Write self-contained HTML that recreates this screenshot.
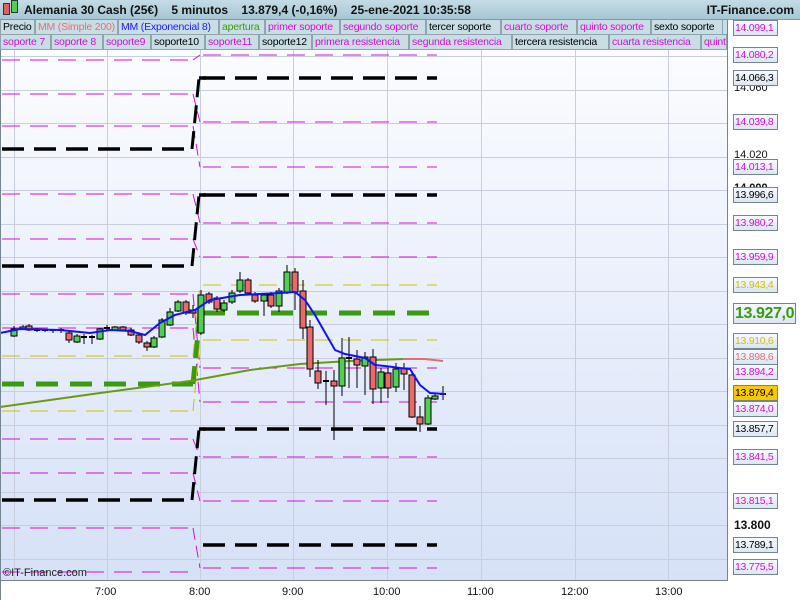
<!DOCTYPE html>
<html><head><meta charset="utf-8"><style>
*{margin:0;padding:0;box-sizing:border-box}
body{width:800px;height:600px;overflow:hidden;background:#fff;font-family:"Liberation Sans",sans-serif;position:relative}
#hdr{position:absolute;left:0;top:0;width:800px;height:20px;background:linear-gradient(#c4dce6,#a6c6d4);border-bottom:1px solid #7f9aa6;font-size:12px;font-weight:bold;color:#111;line-height:20px}
.row{position:absolute;left:0;width:727px;height:15px;background:#c9dde5;border-bottom:1px solid #7f9aa6}
.c{position:absolute;top:0;height:15px;border:1px solid #8fa4ae;border-top:none;font-size:10.5px;letter-spacing:-0.2px;line-height:14px;padding-left:2px;white-space:nowrap;overflow:hidden;background:#c9dde5}
.m{color:#d010d0}
.lb{position:absolute;left:733px;width:45px;height:16px;border:1px solid #73858f;background:linear-gradient(#f6f9ff,#dde6f2);font-size:10.5px;letter-spacing:-0.3px;line-height:15px;padding-left:1px;white-space:nowrap;overflow:hidden}
.tk{position:absolute;font-size:11px;color:#111}
.tm{position:absolute;top:586px;font-size:11px;color:#111}
</style></head><body>
<svg id="s" width="800" height="600" style="position:absolute;left:0;top:0">
<defs><linearGradient id="bg" x1="0" y1="0" x2="0" y2="1"><stop offset="0" stop-color="#fbfcff"/><stop offset="1" stop-color="#d6e1f7"/></linearGradient></defs>
<rect x="0" y="50" width="727" height="530" fill="url(#bg)"/>
<g id="g"></g>
<line x1="727.5" y1="20" x2="727.5" y2="581" stroke="#73858f"/>
<line x1="0" y1="580.5" x2="728" y2="580.5" stroke="#73858f"/>
<line x1="0.5" y1="20" x2="0.5" y2="600" stroke="#73858f"/>
</svg>
<div id="hdr"><span style="position:absolute;left:3px;top:3px;width:7px;height:12px;background:#e06060;border:1px solid #333"></span><span style="position:absolute;left:11px;top:0px;width:7px;height:13px;background:#50d050;border:1px solid #333"></span><span style="position:absolute;left:24px">Alemania 30 Cash (25€)&nbsp;&nbsp;&nbsp; 5 minutos &nbsp;&nbsp; 13.879,4 (-0,16%) &nbsp;&nbsp; 25-ene-2021 10:35:58</span><span style="position:absolute;right:6px">IT-Finance.com</span></div>
<div class="row" style="top:20px">
<div class="c" style="left:0;width:35px">Precio</div>
<div class="c" style="left:35px;width:83px;color:#e07070">MM (Simple 200)</div>
<div class="c" style="left:118px;width:101px;color:#1a1aff">MM (Exponencial 8)</div>
<div class="c" style="left:219px;width:46px;color:#3a9a10">apertura</div>
<div class="c m" style="left:265px;width:75px">primer soporte</div>
<div class="c m" style="left:340px;width:86px">segundo soporte</div>
<div class="c" style="left:426px;width:75px">tercer soporte</div>
<div class="c m" style="left:501px;width:76px">cuarto soporte</div>
<div class="c m" style="left:577px;width:74px">quinto soporte</div>
<div class="c" style="left:651px;width:72px">sexto soporte</div>
</div>
<div class="row" style="top:35px">
<div class="c m" style="left:0;width:51px">soporte 7</div>
<div class="c m" style="left:51px;width:52px">soporte 8</div>
<div class="c m" style="left:103px;width:48px">soporte9</div>
<div class="c" style="left:151px;width:54px">soporte10</div>
<div class="c m" style="left:205px;width:54px">soporte11</div>
<div class="c" style="left:259px;width:53px">soporte12</div>
<div class="c m" style="left:312px;width:97px">primera resistencia</div>
<div class="c m" style="left:409px;width:103px">segunda resistencia</div>
<div class="c" style="left:512px;width:97px">tercera resistencia</div>
<div class="c m" style="left:609px;width:92px">cuarta resistencia</div>
<div class="c m" style="left:701px;width:26px">quinta resistencia</div>
</div>
<div class="tk" style="left:734px;top:82px">14.060</div>
<div class="tk" style="left:734px;top:149px">14.020</div>
<div class="tk" style="left:734px;top:182px;font-weight:bold">14.000</div>
<div class="tk" style="left:734px;top:518px;font-weight:bold;font-size:12px">13.800</div>
<div class="lb m" style="top:20px">14.099,1</div>
<div class="lb m" style="top:47px">14.080,2</div>
<div class="lb" style="top:70px">14.066,3</div>
<div class="lb m" style="top:114px">14.039,8</div>
<div class="lb m" style="top:159px">14.013,1</div>
<div class="lb" style="top:187px">13.996,6</div>
<div class="lb m" style="top:215px">13.980,2</div>
<div class="lb m" style="top:249px">13.959,9</div>
<div class="lb" style="top:277px;color:#d0c000">13.943,4</div>
<div class="lb" style="top:303px;width:63px;height:21px;font-size:16px;letter-spacing:-0.4px;line-height:20px;font-weight:bold;color:#3a9a10">13.927,0</div>
<div class="lb" style="top:333px;color:#d0c000">13.910,6</div>
<div class="lb" style="top:349px;color:#e07070">13.898,6</div>
<div class="lb m" style="top:364px">13.894,2</div>
<div class="lb" style="top:385px;background:#f8c800">13.879,4</div>
<div class="lb m" style="top:401px">13.874,0</div>
<div class="lb" style="top:421px">13.857,7</div>
<div class="lb m" style="top:449px">13.841,5</div>
<div class="lb m" style="top:493px">13.815,1</div>
<div class="lb" style="top:537px">13.789,1</div>
<div class="lb m" style="top:559px">13.775,5</div>
<div class="tm" style="left:95px">7:00</div>
<div class="tm" style="left:189px">8:00</div>
<div class="tm" style="left:282px">9:00</div>
<div class="tm" style="left:373px">10:00</div>
<div class="tm" style="left:467px">11:00</div>
<div class="tm" style="left:561px">12:00</div>
<div class="tm" style="left:655px">13:00</div>
<div style="position:absolute;left:3px;top:567px;font-size:11px;color:#222">©IT-Finance.com</div>
<script>
var g=document.getElementById('g'),h='';
function L(x1,y1,x2,y2,c,w,d,o){h+='<line x1="'+x1+'" y1="'+y1+'" x2="'+x2+'" y2="'+y2+'" stroke="'+c+'" stroke-width="'+w+'"'+(d?' stroke-dasharray="'+d+'"':'')+(o?' opacity="'+o+'"':'')+'/>';}
[14,107,200,293,387,481,575,668].forEach(function(x){L(x+.5,50,x+.5,580,'#c8cede',1)});
for(var y=56;y<580;y+=33.5){L(0,Math.round(y)+.5,727,Math.round(y)+.5,'#c8cede',1)}
var M='#d010d0',K='#000',Y='#d0c000',G='#3a9a10';
[60,94,126,194,239,294,328,439,473,528,572].forEach(function(y){L(2,y,193,y,M,1,'18 10')});
[149,266,500].forEach(function(y){L(2,y,192,y,K,3.5,'22 10')});
[356,411].forEach(function(y){L(2,y,193,y,Y,1,'18 10')});
L(2,384,193,384,G,5,'22 12');
[55,122,167,223,257,368,402,457,501,568].forEach(function(y){L(203,y,437,y,M,1,'18 10')});
[78,195,429,545].forEach(function(y){L(203,y,437,y,K,3.5,'22 10')});
[285,340].forEach(function(y){L(203,y,437,y,Y,1,'18 10')});
L(203,313,437,313,G,5,'22 12');
[[60,55],[94,122],[126,167],[194,223],[239,257],[294,368],[328,402],[439,457],[473,501],[528,568]].forEach(function(p){L(193,p[0],200,p[1],M,1,'12 6')});
[[149,78],[266,195],[500,429]].forEach(function(p){L(192,p[0],199,p[1],K,3,'18 8');L(199,p[1],206,p[1],K,3.5)});
L(193,384,200,313,G,5,'18 8');L(193,356,200,285,Y,1,'12 6');L(193,411,200,340,Y,1,'12 6');
h+='<polyline fill="none" stroke="#6a9a10" stroke-width="2" points="0,407 100,393 190,381 250,370 300,364 350,361 403,359"/>';
h+='<polyline fill="none" stroke="#e07070" stroke-width="2" points="403,359 425,359 443,361"/>';
var C=[[14,336,329,326,337],[23,329,327,325,330],[29,326,330,324,331],[37,330,330,328,332],[45,330,330,329,332],[53,330,331,329,333],[61,330,331,328,333],[69,333,340,332,343],[77,342,336,334,343],[84,337,337,334,344],[92,337,337,335,344],[100,339,329,328,340],[107,328,328,325,331],[115,330,327,326,331],[123,327,330,326,331],[131,330,335,328,336],[139,335,342,334,344],[147,343,347,341,351],[154,347,338,336,348],[162,337,320,318,338],[170,325,312,308,326],[178,311,302,300,312],[186,302,313,300,315],[193,310,313,305,318],
[201,333,295,290,335],[209,294,302,292,304],[217,298,309,296,312],[224,310,303,300,312],[232,302,293,290,304],[240,291,280,272,293],[248,280,293,278,295],[255,295,301,292,303],[264,301,295,293,316],[271,295,306,292,308],[279,306,291,288,312],[287,292,272,265,294],[295,272,292,268,310],[303,291,328,280,339],[310,327,369,320,377],[318,371,383,360,389],[326,381,381,371,405],[334,381,386,370,440],[342,386,358,338,396],[349,358,358,337,388],[357,359,365,350,388],[365,366,357,352,395],[373,357,389,349,404],[381,388,372,368,403],[388,373,388,368,398],[396,387,369,363,392],[404,368,374,363,390],[412,375,417,372,418],[420,417,424,406,432],[428,424,398,395,425],[435,399,396,393,400],[443,394,394,386,400]];
C.forEach(function(c){var x=c[0],o=c[1],cl=c[2],t=Math.min(o,cl),b=Math.max(o,cl);L(x,c[3],x,c[4],'#000',1);
if(b-t<2){L(x-3,t,x+3,t,'#000',2)}else h+='<rect x="'+(x-3)+'" y="'+t+'" width="6" height="'+(b-t)+'" fill="'+(cl<o?'#50d050':'#e86a6a')+'" stroke="#000" stroke-width="1"/>';});
h+='<polyline fill="none" stroke="#1010ff" stroke-width="2" points="0,333 20,329 60,330 90,333 110,330 130,331 145,335 160,323 175,315 195,310 210,300 240,295 280,293 295,292 305,300 315,315 335,350 345,354 365,358 375,365 385,366 400,368 410,369 420,385 430,393 445,394"/>';
g.innerHTML=h;
</script>
</body></html>
